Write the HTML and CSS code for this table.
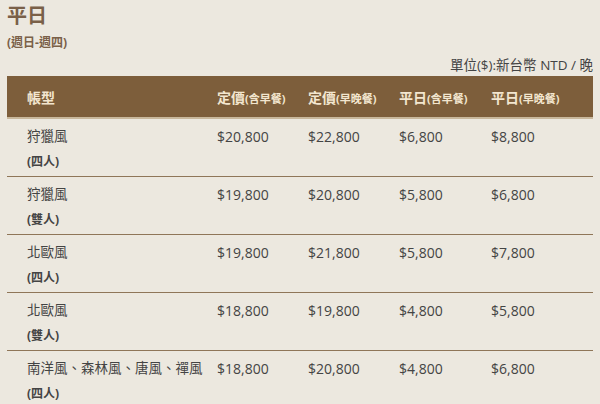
FILE: index.html
```html
<!DOCTYPE html>
<html lang="zh-Hant">
<head>
<meta charset="utf-8">
<link rel="stylesheet" href="styles.css">
</head>
<body>
<div class="page">
  <h2 class="title">平日</h2>
  <p class="sub">(週日-週四)</p>
  <p class="unit">單位($):新台幣 NTD / 晚</p>
  <table class="price">
    <thead>
      <tr>
        <th class="c1">帳型</th>
        <th class="c2">定價<small>(含早餐)</small></th>
        <th class="c3">定價<small>(早晚餐)</small></th>
        <th class="c4">平日<small>(含早餐)</small></th>
        <th class="c5">平日<small>(早晚餐)</small></th>
      </tr>
    </thead>
    <tbody>
      <tr><td class="name">狩獵風<br><small>(四人)</small></td><td>$20,800</td><td>$22,800</td><td>$6,800</td><td>$8,800</td></tr>
      <tr><td class="name">狩獵風<br><small>(雙人)</small></td><td>$19,800</td><td>$20,800</td><td>$5,800</td><td>$6,800</td></tr>
      <tr><td class="name">北歐風<br><small>(四人)</small></td><td>$19,800</td><td>$21,800</td><td>$5,800</td><td>$7,800</td></tr>
      <tr><td class="name">北歐風<br><small>(雙人)</small></td><td>$18,800</td><td>$19,800</td><td>$4,800</td><td>$5,800</td></tr>
      <tr><td class="name">南洋風、森林風、唐風、禪風<br><small>(四人)</small></td><td>$18,800</td><td>$20,800</td><td>$4,800</td><td>$6,800</td></tr>
    </tbody>
  </table>
</div>
</body>
</html>
```
FILE: styles.css
```css
html, body {
  margin: 0;
  padding: 0;
  background: #ece8df;
}
.page {
  padding: 3px 7px 0 7px;
  font-family: "Open Sans", "Noto Sans CJK TC", sans-serif;
  color: #444;
}
.title {
  margin: 0;
  font-size: 20px;
  line-height: 26px;
  font-weight: 700;
  color: #7a6048;
}
.sub {
  margin: 5px 0 0 0;
  font-size: 12px;
  line-height: 17px;
  font-weight: 700;
  color: #7a6048;
}
.unit {
  margin: 6px 0 0 0;
  text-align: right;
  font-size: 13.5px;
  line-height: 17px;
  color: #444;
}
.price {
  width: 586px;
  margin-top: 2px;
  border-collapse: collapse;
  table-layout: fixed;
}
.price th {
  background: #7d5e3b;
  color: #f3e6cf;
  font-size: 14px;
  font-weight: 700;
  text-align: left;
  height: 41px;
  padding: 0 0 0 20px;
  border-bottom: 2px solid #c9b89c;
  white-space: nowrap;
}
.price th small {
  font-size: 11px;
}
.c1 { width: 170px; }
.c2 { width: 71px; }
.c3 { width: 71px; }
.c4 { width: 72px; }
.c5 { width: 102px; }
.price td {
  vertical-align: top;
  font-size: 14px;
  line-height: 25px;
  padding: 5px 0 2px 20px;
  height: 50px;
  color: #444;
  border-bottom: 1px solid #8f7658;
  white-space: nowrap;
}
.price td.name {
  font-size: 13.5px;
}
.price td small {
  font-size: 12px;
  font-weight: 700;
}
.price tbody tr:last-child td {
  border-bottom: none;
}
```
